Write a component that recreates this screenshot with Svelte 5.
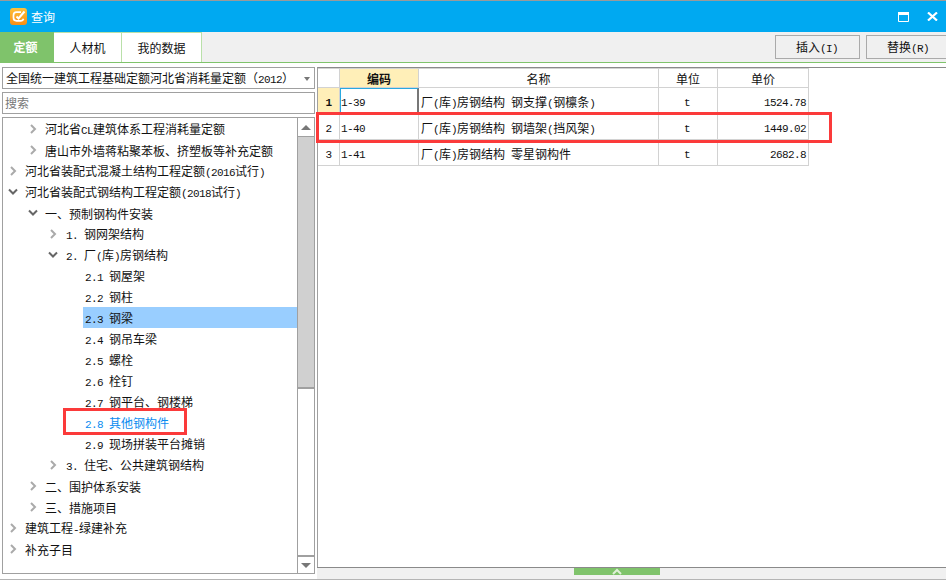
<script>
  const rows = [
    { l: 2, arrow: 'r', t: '河北省CL建筑体系工程消耗量定额' },
    { l: 2, arrow: 'r', t: '唐山市外墙蒋粘聚苯板、挤塑板等补充定额' },
    { l: 0, arrow: 'r', t: '河北省装配式混凝土结构工程定额(2016试行)' },
    { l: 0, arrow: 'd', t: '河北省装配式钢结构工程定额(2018试行)' },
    { l: 2, arrow: 'd', t: '一、预制钢构件安装' },
    { l: 4, arrow: 'r', t: '1. 钢网架结构' },
    { l: 4, arrow: 'd', t: '2. 厂(库)房钢结构' },
    { l: 6, t: '2.1 钢屋架' },
    { l: 6, t: '2.2 钢柱' },
    { l: 6, t: '2.3 钢梁', sel: true },
    { l: 6, t: '2.4 钢吊车梁' },
    { l: 6, t: '2.5 螺栓' },
    { l: 6, t: '2.6 栓钉' },
    { l: 6, t: '2.7 钢平台、钢楼梯' },
    { l: 6, t: '2.8 其他钢构件', link: true },
    { l: 6, t: '2.9 现场拼装平台摊销' },
    { l: 4, arrow: 'r', t: '3. 住宅、公共建筑钢结构' },
    { l: 2, arrow: 'r', t: '二、围护体系安装' },
    { l: 2, arrow: 'r', t: '三、措施项目' },
    { l: 0, arrow: 'r', t: '建筑工程-绿建补充' },
    { l: 0, arrow: 'r', t: '补充子目' }
  ];
  const table = [
    { n: 1, code: '1-39', name: '厂(库)房钢结构 钢支撑(钢檩条)', unit: 't', price: '1524.78' },
    { n: 2, code: '1-40', name: '厂(库)房钢结构 钢墙架(挡风架)', unit: 't', price: '1449.02' },
    { n: 3, code: '1-41', name: '厂(库)房钢结构 零星钢构件', unit: 't', price: '2682.8' }
  ];
  const parts = (s) => s.split(/([\x20-\x7e]+)/).filter(Boolean).map((v) => ({ v, latin: /^[\x20-\x7e]/.test(v) }));
</script>

{#snippet txt(s)}<span class="run">{#each parts(s) as p}{#if p.latin}<span class="latin">{p.v}</span>{:else}{p.v}{/if}{/each}</span>{/snippet}

<div class="win">
  <header class="title">
    <svg class="logo" width="17" height="17" viewBox="0 0 17 17">
      <defs><linearGradient id="lg" x1="0" y1="0" x2="0" y2="1"><stop offset="0" stop-color="#fdc23c"/><stop offset="1" stop-color="#f78d14"/></linearGradient></defs>
      <rect width="17" height="17" rx="3" fill="url(#lg)"/>
      <path d="M11 4.2H6.5a3 3 0 0 0-3 3v2.6a3 3 0 0 0 3 3h4.5a2.6 2.6 0 0 0 2.5-2" fill="none" stroke="#fff" stroke-width="1.7"/>
      <path d="M6.5 8.5l2 2 6-7" fill="none" stroke="#fff" stroke-width="2"/>
    </svg>
    <span class="title-text">查询</span>
    <span class="spacer"></span>
    <svg class="max" width="11" height="10" viewBox="0 0 11 10"><path d="M.5.5h10v9H.5z" fill="none" stroke="#fff"/><path d="M0 0h11v3H0z" fill="#fff"/></svg>
    <svg class="close" width="11" height="9" viewBox="0 0 11 9"><path d="M1 .5l9 8M10 .5l-9 8" stroke="#fff" stroke-width="2.2"/></svg>
  </header>

  <nav class="toolbar">
    <div class="tab active">定额</div>
    <div class="tab t2">人材机</div>
    <div class="tab t3">我的数据</div>
    <span class="spacer"></span>
    <button class="btn b1">{@render txt('插入(I)')}</button>
    <button class="btn b2">{@render txt('替换(R)')}</button>
  </nav>

  <main class="body">
    <aside class="left">
      <div class="select">
        <span>全国统一建筑工程基础定额河北省消耗量定额（<span class="latin">2012</span>）</span>
        <i class="caret"></i>
      </div>
      <div class="search">搜索</div>
      <div class="tree">
        <div class="tree-rows">
          {#each rows as r}
            <div class="row lv{r.l}">
              <span class="arrow">
                {#if r.arrow === 'r'}
                  <svg width="8" height="10" viewBox="0 0 8 10"><path d="M2 1l4 4-4 4" fill="none" stroke="#aaa" stroke-width="2"/></svg>
                {:else if r.arrow === 'd'}
                  <svg width="10" height="8" viewBox="0 0 10 8"><path d="M1 1.5l4 4 4-4" fill="none" stroke="#666" stroke-width="2"/></svg>
                {/if}
              </span>
              <span class="label" class:sel={r.sel} class:link={r.link}>{@render txt(r.t)}</span>
            </div>
          {/each}
        </div>
        <div class="sbar">
          <div class="sbtn"><i class="up"></i></div>
          <div class="thumb"></div>
          <div class="strack"></div>
          <div class="sbtn last"><i class="down"></i></div>
        </div>
      </div>
    </aside>

    <section class="right">
      <div class="grid-wrap">
        <div class="grid">
          <div class="gr head">
            <div class="c c0"></div>
            <div class="c c1 cur-head">编码</div>
            <div class="c c2">名称</div>
            <div class="c c3">单位</div>
            <div class="c c4">单价</div>
          </div>
          {#each table as t, i}
            <div class="gr">
              <div class="c c0 rn" class:cur-n={i === 0}><span class="latin">{t.n}</span></div>
              <div class="c c1 code" class:cur={i === 0}><span class="latin">{t.code}</span></div>
              <div class="c c2 name">{@render txt(t.name)}</div>
              <div class="c c3 unit"><span class="latin">{t.unit}</span></div>
              <div class="c c4 price"><span class="latin">{t.price}</span></div>
            </div>
          {/each}
        </div>
      </div>
      <footer class="foot">
        <div class="grip">
          <svg width="10" height="7" viewBox="0 0 10 7"><path d="M1 6l4-4 4 4" fill="none" stroke="#dff0d8" stroke-width="2"/></svg>
        </div>
      </footer>
    </section>
  </main>

  <div class="mark m1"></div>
  <div class="mark m2"></div>
</div>

<style>
  :global(body) { margin: 0; background: #fff; }
  .win {
    position: relative;
    width: 946px;
    height: 584px;
    overflow: hidden;
    display: flex;
    flex-direction: column;
    background: #fff;
    font: 12px/1 "Noto Sans CJK SC", sans-serif;
    color: #111;
  }
  .latin { font-family: "Liberation Mono", monospace; font-size: 11px; letter-spacing: -0.6px; }
  .run { white-space: pre; }
  .spacer { flex: 1; }

  .title {
    height: 32px;
    box-sizing: border-box;
    border-top: 1px solid #9a9a9a;
    background: #00a9f1;
    display: flex;
    align-items: center;
    padding-left: 10px;
    color: #fff;
    flex: none;
  }
  .logo { margin-right: 4px; }
  .max { margin-right: 18px; }
  .close { margin-right: 8px; }

  .toolbar {
    height: 31px;
    box-sizing: border-box;
    flex: none;
    display: flex;
    background: #f0f0f0;
    border-bottom: 1px solid #7fc36b;
  }
  .tab {
    display: flex;
    align-items: center;
    justify-content: center;
    background: #fff;
    border-right: 1px solid #b9e0a9;
    border-top: 1px solid #b9e0a9;
    box-sizing: border-box;
  }
  .tab.active { width: 54px; padding-right: 3px; background: #7fc36b; color: #fff; font-weight: 700; border: 0; }
  .t2 { width: 68px; }
  .t3 { width: 80px; }
  .btn {
    height: 24px;
    margin-top: 3px;
    background: #f0f0f0;
    border: 1px solid #aaa;
    font: inherit;
    color: inherit;
    padding: 1px 1px 0 0;
  }
  .b1 { width: 85px; margin-right: 6px; }
  .b2 { width: 85px; margin-right: -5px; }

  .body {
    height: 517px;
    box-sizing: border-box;
    flex: none;
    display: flex;
    background: #fff;
    border-bottom: 1px solid #b4b4b4;
  }
  .left {
    width: 316px;
    flex: none;
    padding: 4px 1px 0 2px;
    box-sizing: border-box;
    display: flex;
    flex-direction: column;
  }
  .select {
    height: 22px;
    box-sizing: border-box;
    border: 1px solid #a0a0a0;
    background: #fff;
    display: flex;
    align-items: center;
    justify-content: space-between;
    padding: 1px 4px 0 3px;
  }
  .caret { width: 0; height: 0; border: 3px solid transparent; border-top: 4px solid #777; border-bottom: 0; }
  .search {
    height: 22px;
    margin-top: 3px;
    box-sizing: border-box;
    border: 1px solid #a0a0a0;
    background: #fff;
    color: #777;
    display: flex;
    align-items: center;
    padding-left: 2px;
  }
  .tree {
    height: 457px;
    margin-top: 3px;
    box-sizing: border-box;
    border: 1px solid #a0a0a0;
    background: #fff;
    display: flex;
    overflow: hidden;
  }
  .tree-rows { flex: 1; min-width: 0; }
  .row { height: 21px; display: flex; align-items: center; white-space: nowrap; }
  .arrow { width: 21px; flex: none; display: flex; align-items: center; justify-content: center; padding-right: 4px; box-sizing: border-box; }
  .row.lv0 { padding-left: 1px; }
  .row.lv2 { padding-left: 21px; }
  .row.lv4 { padding-left: 41px; }
  .row.lv4 .arrow { width: 22px; padding-right: 5px; }
  .row.lv6 { padding-left: 59px; }
  .label { height: 21px; box-sizing: border-box; padding-top: 2px; display: flex; align-items: center; }
  .lv6 .label { flex: 1; padding-left: 2px; }
  .label.sel { background: #99ceff; }
  .label.link { color: #0a8cf0; }

  .sbar { width: 16px; flex: none; display: flex; flex-direction: column; border-left: 1px solid #a0a0a0; }
  .sbtn { height: 18px; flex: none; display: flex; align-items: center; justify-content: center; background: #fff; box-sizing: border-box; }
  .sbtn.last { border-top: 2px solid #a0a0a0; }
  .up { width: 0; height: 0; border: 5px solid transparent; border-bottom: 5px solid #777; border-top: 0; }
  .down { width: 0; height: 0; border: 5px solid transparent; border-top: 5px solid #777; border-bottom: 0; }
  .thumb { height: 250px; flex: none; background: #d0d0d0; border-top: 1px solid #a0a0a0; border-bottom: 2px solid #a0a0a0; }
  .strack { flex: 1; background: #fff; }

  .right {
    flex: 1;
    margin: 4px 0 0 1px;
    display: flex;
    flex-direction: column;
    min-width: 0;
  }
  .grid-wrap {
    flex: 1;
    border-top: 1px solid #8a8a8a;
    border-left: 1px solid #a0a0a0;
  }
  .grid { display: flex; flex-direction: column; width: 491px; }
  .gr { display: flex; height: 26px; }
  .gr.head { height: 20px; }
  .c {
    box-sizing: border-box;
    border-right: 1px solid #d2d2d2;
    border-bottom: 1px solid #d2d2d2;
    display: flex;
    align-items: center;
    justify-content: center;
    flex: none;
    padding-top: 5px;
  }
  .head .c { border-top: 1px solid #d2d2d2; padding-top: 1px; }
  .c0 { width: 22px; }
  .c1 { width: 79px; }
  .c2 { width: 240px; }
  .c3 { width: 59px; }
  .c4 { width: 91px; }
  .unit { padding-right: 2px; }
  .cur-head { background: #ffefb8; font-weight: 700; }
  .cur-n { background: #ffefb8; font-weight: 700; }
  .code { justify-content: flex-start; padding-left: 1px; }
  .cur { border: 1px solid #29a9e0; border-right: 2px solid #777; border-bottom: 1px solid #d2d2d2; padding-left: 0; }
  .name { justify-content: flex-start; padding-left: 2px; }
  .price { justify-content: flex-end; padding-right: 2px; }

  .foot {
    height: 12px;
    flex: none;
    background: #f0f0f0;
    border-top: 1px solid #8a8a8a;
    box-sizing: border-box;
  }
  .grip {
    margin-left: 257px;
    width: 86px;
    height: 7px;
    background: #7fc36b;
    display: flex;
    justify-content: center;
    align-items: flex-start;
  }

  .mark { position: absolute; border: 3px solid #fb3a3a; box-sizing: border-box; pointer-events: none; }
  .m1 { left: 63px; top: 408px; width: 124px; height: 27px; }
  .m2 { left: 316px; top: 112px; width: 516px; height: 31px; }
</style>
